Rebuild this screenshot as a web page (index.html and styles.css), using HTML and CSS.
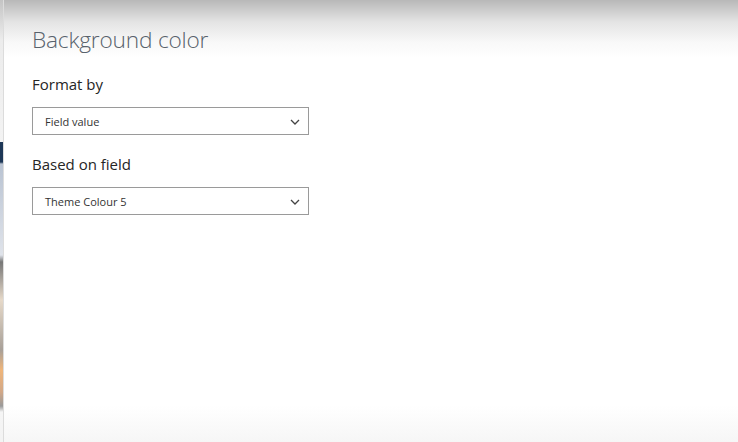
FILE: index.html
```html
<!DOCTYPE html>
<html lang="en">
<head>
    <meta charset="UTF-8">
    <title>Background color</title>
    <link rel="stylesheet" href="styles.css">
</head>
<body>

<div class="pantalla">
    <div class="fondo"></div>
    <div class="panel">
        <h2>Background color</h2>

        <label for="formato">Format by</label>
        <div class="selector">
            <span id="formato">Field value</span>
            <svg width="10" height="6" viewBox="0 0 10 6"><path d="M1 1l4 4 4-4" fill="none" stroke="#444" stroke-width="1.3"/></svg>
        </div>

        <label for="campo">Based on field</label>
        <div class="selector">
            <span id="campo">Theme Colour 5</span>
            <svg width="10" height="6" viewBox="0 0 10 6"><path d="M1 1l4 4 4-4" fill="none" stroke="#444" stroke-width="1.3"/></svg>
        </div>
    </div>
</div>

</body>
</html>
```
FILE: styles.css
```css
body {
    margin: 0;
    font-family: "Open Sans", "Noto Sans", sans-serif;
    background: #fff;
}
.pantalla {
    display: flex;
    height: 442px;
    overflow: hidden;
}
.fondo {
    width: 3px;
    flex-shrink: 0;
    background: linear-gradient(to bottom,
        #c4c4c4 0, #ececec 40px, #f3f3f3 142px,
        #1d3757 142px, #1d3757 162px,
        #b9c3d2 164px, #dfe3ea 255px,
        #777 262px, #e6d9c9 300px, #a8a098 350px,
        #efb57a 370px, #d2a888 392px, #9a9a9a 406px,
        #f5f5f5 412px, #f3f3f3 442px);
}
.panel {
    flex: 1;
    border-left: 1px solid #dcdcdc;
    padding: 24px 28px 0;
    background: linear-gradient(to bottom,
        #b8b8b8 0, #e4e4e4 22px, #f8f8f8 42px, #fff 58px,
        #fff 405px, #f6f6f6 442px);
}
h2 {
    margin: 0 0 19px;
    font-weight: 300;
    font-size: 22.7px;
    color: #58626c;
    letter-spacing: -0.2px;
}
label {
    display: block;
    font-size: 15px;
    color: #252525;
    margin-bottom: 13px;
}
.selector {
    width: 277px;
    height: 28px;
    border: 1px solid #9a9a9a;
    background: #fff;
    display: flex;
    align-items: center;
    justify-content: space-between;
    padding: 0 8px 0 12px;
    box-sizing: border-box;
    margin-bottom: 19px;
    font-size: 11px;
    color: #333;
}
.selector svg {
    margin-top: 1px;
}
```
